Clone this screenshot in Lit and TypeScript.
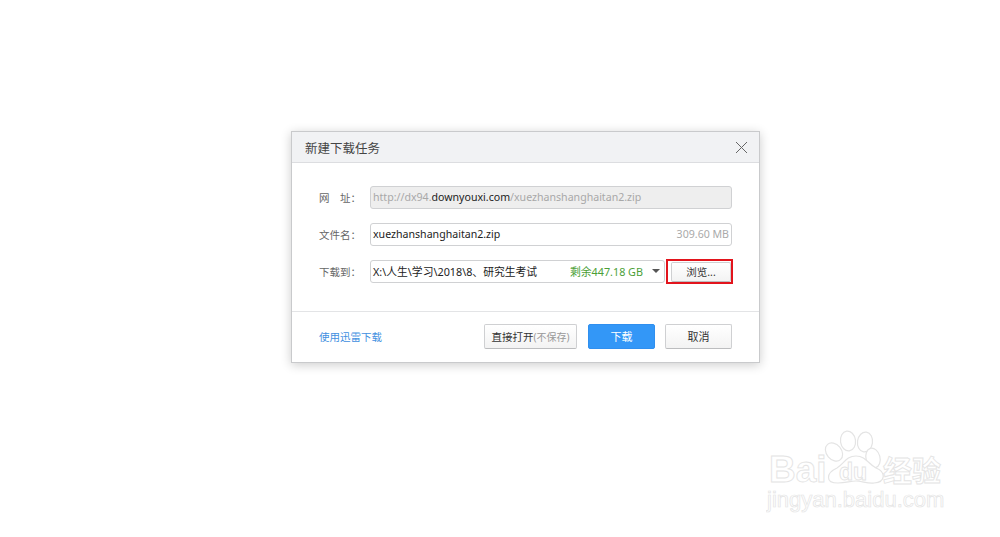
import { LitElement, html, css } from "lit";
import { customElement } from "lit/decorators.js";

@customElement("app-root")
export class AppRoot extends LitElement {
  static styles = css`
    :host {
      display: block;
      position: relative;
      width: 1000px;
      height: 537px;
      overflow: hidden;
      background: #fff;
      font-family: "Noto Sans", "Noto Sans CJK SC", sans-serif;
      font-size: 11px;
      color: #333;
    }
    .page { padding: 131px 0 0 291px; }
    .dialog {
      box-sizing: border-box;
      width: 469px;
      height: 232px;
      border: 1px solid #c9cacc;
      background: #fff;
      box-shadow: 0 2px 10px rgba(0, 0, 0, 0.2);
      display: flex;
      flex-direction: column;
    }
    .head {
      box-sizing: border-box;
      height: 31px;
      flex: none;
      background: #f1f2f4;
      border-bottom: 1px solid #dcdde0;
      display: flex;
      align-items: center;
      justify-content: space-between;
      padding: 0 11px 0 13px;
      font-size: 12.5px;
      color: #444;
    }
    .close { display: block; }
    .body {
      box-sizing: border-box;
      height: 149px;
      flex: none;
      border-bottom: 1px solid #e3e4e6;
      padding: 23px 26px 0 27px;
      display: flex;
      flex-direction: column;
      gap: 15px;
    }
    .row { display: flex; align-items: center; height: 22px; }
    .label {
      width: 51px;
      flex: none;
      color: #666;
      font-size: 10.5px;
      white-space: pre;
    }
    .field {
      box-sizing: border-box;
      height: 23px;
      width: 362px;
      border: 1px solid #d0d1d3;
      border-radius: 3px;
      display: flex;
      align-items: center;
      justify-content: space-between;
      padding: 0 2px;
      white-space: nowrap;
      color: #222;
      font-size: 10.6px;
    }
    .field.off { background: #eeeeee; color: #a8a8a8; }
    .field.off b { font-weight: normal; color: #222; }
    .size { color: #aaa; }
    .field.dest { width: 296px; padding-right: 4px; font-size: 10.8px; }
    .right { display: flex; align-items: center; gap: 9px; }
    .free { color: #4c9f38; font-size: 10.8px; }
    .arrow {
      width: 0;
      height: 0;
      border-left: 4px solid transparent;
      border-right: 4px solid transparent;
      border-top: 4px solid #555;
    }
    .mark {
      box-sizing: border-box;
      margin-left: 1px;
      width: 67px;
      height: 25px;
      border: 2px solid #e2141c;
      padding: 1px 0 0 3px;
    }
    .btn {
      box-sizing: border-box;
      display: flex;
      align-items: center;
      justify-content: center;
      height: 25px;
      border: 1px solid #cfd0d2;
      border-bottom-color: #bcbdbf;
      border-radius: 2px;
      background: linear-gradient(#ffffff, #f3f3f3);
      color: #333;
      font-size: 11px;
      white-space: nowrap;
    }
    .mark .btn { height: 20px; width: 60px; font-size: 10.5px; }
    .foot {
      flex: 1;
      display: flex;
      align-items: center;
      padding: 0 27px 2px 27px;
    }
    .link { color: #3f8fdf; font-size: 10.5px; margin-right: auto; }
    .open { width: 93px; font-size: 10.5px; }
    .open span { color: #999; font-size: 10px; }
    .primary {
      width: 67px;
      margin: 0 10px 0 11px;
      background: #3397f7;
      border-color: #2f8fef;
      color: #fff;
    }
    .cancel { width: 67px; }
    .wm { position: absolute; left: 766px; top: 430px; width: 180px; height: 86px; }
    .wm text {
      fill: #fff;
      stroke: #e4e4e4;
      stroke-width: 0.9;
      font-family: "Liberation Sans", "Noto Sans CJK SC", sans-serif;
    }
    .wm .url { stroke-width: 0.7; }
    .wm .shape { fill: #fff; stroke: #e4e4e4; stroke-width: 1.2; }
  `;

  render() {
    return html`
      <div class="page">
        <div class="dialog">
          <div class="head">
            <span>新建下载任务</span>
            <svg class="close" width="13" height="13" viewBox="0 0 13 13">
              <path d="M1 1L12 12M12 1L1 12" stroke="#666" stroke-width="1" fill="none" />
            </svg>
          </div>
          <div class="body">
            <div class="row">
              <span class="label">网　址：</span>
              <div class="field off">
                <span>http://dx94.<b>downyouxi.com</b>/xuezhanshanghaitan2.zip</span>
              </div>
            </div>
            <div class="row">
              <span class="label">文件名：</span>
              <div class="field">
                <span>xuezhanshanghaitan2.zip</span><span class="size">309.60 MB</span>
              </div>
            </div>
            <div class="row">
              <span class="label">下载到：</span>
              <div class="field dest">
                <span>X:\\人生\\学习\\2018\\8、研究生考试</span>
                <span class="right"><span class="free">剩余447.18 GB</span><i class="arrow"></i></span>
              </div>
              <div class="mark"><div class="btn">浏览...</div></div>
            </div>
          </div>
          <div class="foot">
            <span class="link">使用迅雷下载</span>
            <div class="btn open">直接打开<span>(不保存)</span></div>
            <div class="btn primary">下载</div>
            <div class="btn cancel">取消</div>
          </div>
        </div>
      </div>
      <svg class="wm" viewBox="0 0 180 86">
        <ellipse class="shape" cx="68" cy="22" rx="10" ry="7.5" transform="rotate(50 68 22)" />
        <ellipse class="shape" cx="82" cy="11" rx="7.5" ry="10" transform="rotate(-8 82 11)" />
        <ellipse class="shape" cx="99" cy="12" rx="7.5" ry="10" transform="rotate(8 99 12)" />
        <ellipse class="shape" cx="107" cy="28" rx="7" ry="10" transform="rotate(-15 107 28)" />
        <path class="shape" d="M90 26C80 26 78 34 71 38C60 43 59 53 72 53C80 53 84 51 90 51C96 51 102 54 108 53C120 52 120 42 110 38C102 34 100 26 90 26Z" />
        <text x="3" y="52" font-size="37" font-weight="bold">Bai</text>
        <text x="73" y="50" font-size="23" font-weight="bold">du</text>
        <text x="117" y="52" font-size="29" font-weight="bold">经验</text>
        <text class="url" x="1" y="77" font-size="22">jingyan.baidu.com</text>
      </svg>
    `;
  }
}
